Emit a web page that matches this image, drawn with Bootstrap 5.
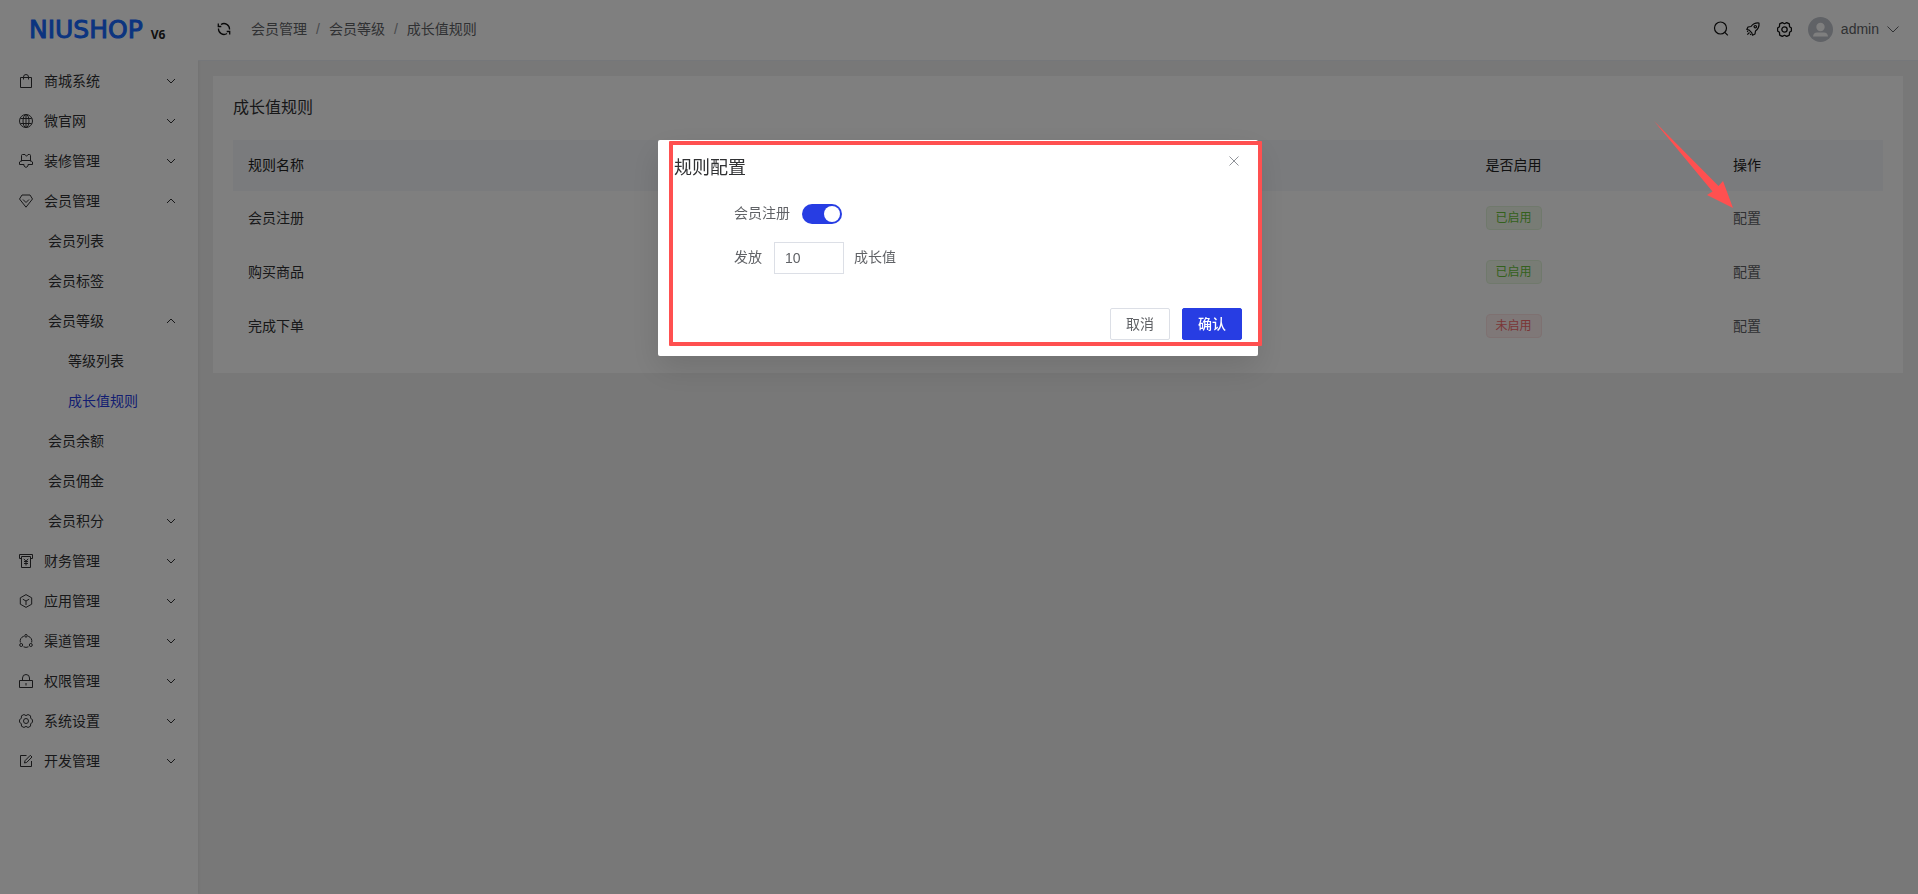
<!DOCTYPE html>
<html lang="zh-CN">
<head>
<meta charset="utf-8">
<meta name="viewport" content="width=device-width, initial-scale=1">
<title>成长值规则</title>
<link href="https://cdn.jsdelivr.net/npm/bootstrap@5.3.0/dist/css/bootstrap.min.css" rel="stylesheet">
<style>
  body { font-family: "Liberation Sans", "Noto Sans CJK SC", sans-serif; font-size: 14px; line-height: 20px; color: #303133; background: #f0f0f0; }
  a { color: inherit; text-decoration: none; }
  svg { display: block; flex: none; fill: none; stroke: currentColor; }
  .side { width: 198px; background: #fff; box-shadow: 0 0 4px rgba(0, 0, 0, .08); }
  .logo { height: 61px; padding: 0 0 2px 29px; }
  .logo-name { font: 25px/24px "DejaVu Sans", sans-serif; color: #1668ff; -webkit-text-stroke: 1px #1668ff; }
  .logo-ver { font: bold 12px/16px "Open Sans", sans-serif; color: #222; margin: 10px 0 0 8px; }
  .menu-link { height: 40px; padding: 0 22px 0 19px; gap: 11px; color: #303133; }
  .menu-link.lv2 { padding-left: 48px; }
  .menu-link.lv3 { padding-left: 68px; }
  .menu-link.current { color: #273de3; }
  .menu-link .arrow { margin-left: auto; }
  .topbar { height: 61px; background: #fff; border-bottom: 1px solid #ebeef5; padding: 0 19px 2px; }
  .crumbs { --bs-breadcrumb-item-padding-x: 9px; --bs-breadcrumb-divider-color: #909399; color: #606266; }
  .crumbs .breadcrumb-item.active { color: #606266; }
  .tool { border: 0; background: none; padding: 0; color: #111; }
  .user { color: #606266; border: 0; background: none; padding: 0; gap: 8px; }
  .content { padding: 15px; }
  .panel { border: 0; border-radius: 0; padding: 20px; color: #303133; }
  .panel h1 { font-size: 16px; line-height: 24px; font-weight: 400; margin: 0 0 20px; }
  .rules { table-layout: fixed; --bs-table-bg: transparent; --bs-table-color: #303133; }
  .rules th, .rules td { padding: 0 15px; height: 54px; border: 0; font-weight: 400; vertical-align: middle; }
  .rules th { height: 51px; padding-bottom: 2px; background: #f5f7fa; color: #222; }
  .rules td a { color: #606266; }
  .c-name { width: 75%; } .c-state { width: 15%; } .c-act { width: 10%; }
  .state { display: inline-block; border: 1px solid; border-radius: 4px; padding: 0 9px; font-size: 12px; line-height: 22px; vertical-align: middle; }
  .state-on { color: #67c23a; background: #f0f9eb; border-color: #e1f3d8; }
  .state-off { color: #f56c6c; background: #fef0f0; border-color: #fde2e2; }

  .rule-modal { padding-right: 2px; }
  .rule-dialog { max-width: 600px; margin: 140px auto 0; }
  .rule-dialog .modal-content { border: 0; border-radius: 2px; color: #606266; box-shadow: 0 12px 32px rgba(0, 0, 0, .12); }
  .rule-dialog .modal-header { border: 0; padding: 16px 16px 0; align-items: flex-start; }
  .rule-dialog .modal-title { font-size: 18px; line-height: 24px; font-weight: 400; color: #303133; }
  .close-x { border: 0; background: none; padding: 0 3px; margin: 0; color: #909399; }
  .rule-dialog .modal-body { padding: 18px 76px 34px; }
  .line { min-height: 32px; }
  .line + .line { margin-top: 12px; }
  .line label { margin-right: 12px; }
  .line label, .line span { padding-bottom: 2px; }
  .form-switch .form-check-input.toggle { width: 40px; height: 20px; margin: 0; border: 0; box-shadow: none; }
  .form-switch .form-check-input.toggle:checked { background-color: #273de3; background-image: url("data:image/svg+xml,%3Csvg xmlns='http://www.w3.org/2000/svg' viewBox='-10 -10 20 20'%3E%3Ccircle r='8' fill='%23fff'/%3E%3C/svg%3E"); }
  .amount { width: 70px; height: 32px; padding: 0 10px; margin-right: 10px; font-size: 14px; border-radius: 0; border-color: #dcdfe6; color: #606266; }
  .rule-dialog .modal-footer { border: 0; padding: 0 16px 16px; gap: 12px; }
  .act { width: 60px; height: 32px; margin: 0; padding: 0; font-size: 14px; border-radius: 2px; }
  .act-cancel { border-color: #dcdfe6; color: #606266; background: #fff; }
  .act-ok { border-color: #273de3; background: #273de3; color: #fff; font-weight: 500; }
  .act-ok:hover { background: #273de3; color: #fff; }
  /* highlight frame and pointer lying over the page */
  .frame-mark { position: absolute; left: 11px; right: -4px; top: 1px; bottom: 10px; border: 4px solid #ff5050; border-radius: 1px; pointer-events: none; }
  .pointer-mark { position: absolute; right: 184px; top: 120px; z-index: 1060; }
</style>
</head>
<body>
<svg class="d-none">
  <symbol id="down" viewBox="0 0 10 10"><path d="M1 3l4 4 4-4"/></symbol>
  <symbol id="up" viewBox="0 0 10 10"><path d="M1 7l4-4 4 4"/></symbol>
  <symbol id="gear" viewBox="0 0 14 14"><path d="M13.450 8.370V5.630L11.700 4.400l-.18-2.600L9.040.520 7 1.600 4.960.520 2.480 1.800 2.300 4.400.55 5.630v2.740L2.300 9.600l.18 2.600 2.480 1.280L7 12.400l2.040 1.080 2.480-1.280.18-2.600z" stroke-linejoin="round"/><circle cx="7" cy="7" r="2.500"/></symbol>
</svg>

<div class="d-flex min-vh-100">
  <aside class="side flex-shrink-0">
    <a href="#" class="logo d-flex align-items-center"><span class="logo-name">NIUSHOP</span><span class="logo-ver">V6</span></a>
    <nav class="d-flex flex-column">
      <a href="#" class="menu-link d-flex align-items-center"><svg width="14" height="14" viewBox="0 0 14 14"><path d="M1.500 3.500h11v10h-11zM4.500 5.500V3a2.500 2.500 0 0 1 5 0v2.500"/></svg>商城系统<svg class="arrow" width="10" height="10"><use href="#down"/></svg></a>
      <a href="#" class="menu-link d-flex align-items-center"><svg width="14" height="14" viewBox="0 0 14 14"><circle cx="7" cy="7" r="6.500"/><ellipse cx="7" cy="7" rx="3" ry="6.500"/><path d="M7 .5v13M1.300 4.500h11.400M1.300 9.500h11.400"/></svg>微官网<svg class="arrow" width="10" height="10"><use href="#down"/></svg></a>
      <a href="#" class="menu-link d-flex align-items-center"><svg width="14" height="14" viewBox="0 0 14 14"><path d="M2.500 7.500v-6q0-1 1-1H6l1.500 1.800L9 .5h1.500q1 0 1 1v6M2.500 6.500h9M2.500 6.500l-2 1.500v2.500h4.500v1.500l2 1.500 2-1.500v-1.500h4.500V8l-2-1.500" stroke-linejoin="round"/></svg>装修管理<svg class="arrow" width="10" height="10"><use href="#down"/></svg></a>
      <a href="#" class="menu-link d-flex align-items-center"><svg width="14" height="14" viewBox="0 0 14 14"><path d="M3 1h8l2.500 4L7 13.200.5 5zM4 5.500l3 3 3-3" stroke-linejoin="round"/></svg>会员管理<svg class="arrow" width="10" height="10"><use href="#up"/></svg></a>
      <a href="#" class="menu-link lv2 d-flex align-items-center">会员列表</a>
      <a href="#" class="menu-link lv2 d-flex align-items-center">会员标签</a>
      <a href="#" class="menu-link lv2 d-flex align-items-center">会员等级<svg class="arrow" width="10" height="10"><use href="#up"/></svg></a>
      <a href="#" class="menu-link lv3 d-flex align-items-center">等级列表</a>
      <a href="#" class="menu-link lv3 current d-flex align-items-center" aria-current="page">成长值规则</a>
      <a href="#" class="menu-link lv2 d-flex align-items-center">会员余额</a>
      <a href="#" class="menu-link lv2 d-flex align-items-center">会员佣金</a>
      <a href="#" class="menu-link lv2 d-flex align-items-center">会员积分<svg class="arrow" width="10" height="10"><use href="#down"/></svg></a>
      <a href="#" class="menu-link d-flex align-items-center"><svg width="14" height="14" viewBox="0 0 14 14"><path d="M2.500 4.500h-2v-4h13v4h-2M2.500 2.500h9M2.500 2.500v11h9v-11M4.800 4.800L7 7.200l2.200-2.400M7 7.200v4.300M5 7.500h4M5 9.500h4"/></svg>财务管理<svg class="arrow" width="10" height="10"><use href="#down"/></svg></a>
      <a href="#" class="menu-link d-flex align-items-center"><svg width="14" height="14" viewBox="0 0 14 14"><path d="M7 .6l5.700 3.200v6.400L7 13.400l-5.700-3.200V3.800zM3.800 5.200L7 7l3.200-1.800M7 7v4" stroke-linejoin="round"/></svg>应用管理<svg class="arrow" width="10" height="10"><use href="#down"/></svg></a>
      <a href="#" class="menu-link d-flex align-items-center"><svg width="14" height="14" viewBox="0 0 14 14"><circle cx="7" cy="1.800" r="1.300"/><circle cx="2.200" cy="11" r="1.500"/><circle cx="11.800" cy="11" r="1.500"/><path d="M4.800 2.200A5.700 5.700 0 0 0 1.300 8.500M9.200 2.200a5.700 5.700 0 0 1 3.500 6.300M4.500 12.800q2.500 1.200 5 0"/></svg>渠道管理<svg class="arrow" width="10" height="10"><use href="#down"/></svg></a>
      <a href="#" class="menu-link d-flex align-items-center"><svg width="14" height="14" viewBox="0 0 14 14"><path d="M.5 6.500h13v7H.5zM3.500 6.500V4a3.500 3.500 0 0 1 7 0v2.500M7 9v2.500"/></svg>权限管理<svg class="arrow" width="10" height="10"><use href="#down"/></svg></a>
      <a href="#" class="menu-link d-flex align-items-center"><svg width="14" height="14"><use href="#gear"/></svg>系统设置<svg class="arrow" width="10" height="10"><use href="#down"/></svg></a>
      <a href="#" class="menu-link d-flex align-items-center"><svg width="14" height="14" viewBox="0 0 14 14"><path d="M7.500 1.500h-6v11h11V7M5.500 9l.5-2.300L11.300 1.300l1.700 1.700-5.300 5.400z"/></svg>开发管理<svg class="arrow" width="10" height="10"><use href="#down"/></svg></a>
    </nav>
  </aside>

  <div class="flex-grow-1">
    <header class="topbar d-flex align-items-center">
      <button class="tool me-3" type="button" aria-label="刷新"><svg width="14" height="14" viewBox="0 0 14 14" stroke-width="1.300"><path d="M4 2.500A5.500 5.500 0 0 1 12.500 7.500M10 11.500A5.500 5.500 0 0 1 1.500 6.500M1.300 1.500v3h3M12.700 12.500v-3h-3"/></svg></button>
      <nav class="ps-1" aria-label="breadcrumb">
        <ol class="breadcrumb crumbs mb-0">
          <li class="breadcrumb-item"><a href="#">会员管理</a></li>
          <li class="breadcrumb-item"><a href="#">会员等级</a></li>
          <li class="breadcrumb-item active" aria-current="page">成长值规则</li>
        </ol>
      </nav>
      <div class="d-flex align-items-center ms-auto">
        <button class="tool me-3" type="button" aria-label="搜索"><svg width="16" height="16" viewBox="0 0 16 16" stroke-width="1.200"><circle cx="7.500" cy="7" r="6"/><path d="M11.800 11.300l3 3"/></svg></button>
        <button class="tool me-3" type="button" aria-label="快捷入口"><svg width="16" height="16" viewBox="0 0 16 16" stroke-width="1.200"><path d="M14 2q.5 5-3.500 8l-.5 3-2.500 1.200-.7-2.400L4.200 9.200 1.800 8.500 3 6l3-.5Q9 1.500 14 2zM4.500 11.500l-2.200 2.200M6 13l-.8.800M3 10l-.8.800" stroke-linejoin="round"/><circle cx="10.300" cy="5.700" r="1.200"/></svg></button>
        <button class="tool me-3" type="button" aria-label="设置"><svg width="15" height="15" stroke-width="1.200"><use href="#gear"/></svg></button>
        <button class="user d-flex align-items-center" type="button">
          <svg width="25" height="25" viewBox="0 0 25 25"><g stroke="none"><circle cx="12.500" cy="12.500" r="12.500" fill="#c0c4cc"/><circle cx="12.500" cy="10" r="4.200" fill="#fff"/><path d="M5 19.500q.5-4 4-4h7q3.500 0 4 4z" fill="#fff"/></g></svg>
          admin
          <svg width="12" height="12" viewBox="0 0 12 12"><path d="M.5 3.500L6 9l5.500-5.500"/></svg>
        </button>
      </div>
    </header>

    <main class="content">
      <section class="card panel">
        <h1>成长值规则</h1>
        <table class="table rules mb-0 align-middle">
          <thead><tr><th class="c-name">规则名称</th><th class="c-state">是否启用</th><th class="c-act">操作</th></tr></thead>
          <tbody>
            <tr><td>会员注册</td><td><span class="state state-on">已启用</span></td><td><a href="#">配置</a></td></tr>
            <tr><td>购买商品</td><td><span class="state state-on">已启用</span></td><td><a href="#">配置</a></td></tr>
            <tr><td>完成下单</td><td><span class="state state-off">未启用</span></td><td><a href="#">配置</a></td></tr>
          </tbody>
        </table>
      </section>
    </main>
  </div>
</div>

<div class="modal-backdrop show"></div>
<div class="modal show d-block rule-modal" tabindex="-1" role="dialog" aria-modal="true" aria-labelledby="ruleTitle">
  <div class="modal-dialog rule-dialog">
    <form class="modal-content">
      <div class="modal-header">
        <h2 class="modal-title" id="ruleTitle">规则配置</h2>
        <button class="close-x ms-auto" type="button" aria-label="关闭"><svg width="10" height="10" viewBox="0 0 10 10"><path d="M.5.5l9 9M9.500.5l-9 9"/></svg></button>
      </div>
      <div class="modal-body">
        <div class="line d-flex align-items-center form-switch p-0">
          <label for="onReg">会员注册</label>
          <input class="form-check-input toggle" type="checkbox" role="switch" id="onReg" checked>
        </div>
        <div class="line d-flex align-items-center">
          <label for="amount">发放</label>
          <input class="form-control amount" type="text" id="amount" value="10">
          <span>成长值</span>
        </div>
      </div>
      <div class="modal-footer">
        <button class="btn act act-cancel" type="button">取消</button>
        <button class="btn act act-ok" type="button">确认</button>
      </div>
      <div class="frame-mark"></div>
    </form>
  </div>
</div>
<svg class="pointer-mark" width="81" height="90" viewBox="0 0 81 90" aria-hidden="true"><path d="M1 1l64.500 65 4.500-5 10 27-26-13 5.500-3.500z" fill="#ff5050" stroke="none"/></svg>
<script src="https://cdn.jsdelivr.net/npm/bootstrap@5.3.0/dist/js/bootstrap.bundle.min.js"></script>
</body>
</html>
